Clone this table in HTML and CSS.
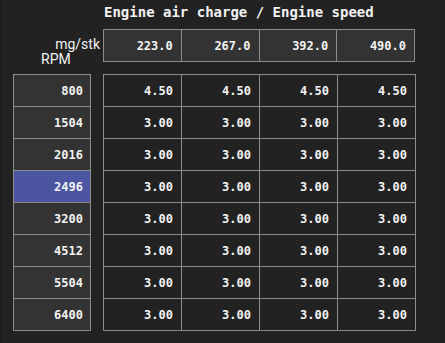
FILE: index.html
```html
<!DOCTYPE html>
<html lang="en">
<head>
    <meta charset="UTF-8">
    <meta name="viewport" content="width=device-width, initial-scale=1.0">
    <title>Engine air charge / Engine speed</title>
    <link rel="stylesheet" href="styles.css">
</head>
<body>
    <div class="map">
        <div class="spacer"></div>
        <div class="title">Engine air charge / Engine speed</div>

        <div class="axis-labels">
            <div class="unit">mg/stk</div>
            <div class="rpm">RPM</div>
        </div>
        <table class="grid head">
            <tr>
                <td>223.0</td>
                <td>267.0</td>
                <td>392.0</td>
                <td>490.0</td>
            </tr>
        </table>

        <table class="grid rows">
            <tr><td>800</td></tr>
            <tr><td>1504</td></tr>
            <tr><td>2016</td></tr>
            <tr><td class="active">2496</td></tr>
            <tr><td>3200</td></tr>
            <tr><td>4512</td></tr>
            <tr><td>5504</td></tr>
            <tr><td>6400</td></tr>
        </table>
        <table class="grid values">
            <tr><td>4.50</td><td>4.50</td><td>4.50</td><td>4.50</td></tr>
            <tr><td>3.00</td><td>3.00</td><td>3.00</td><td>3.00</td></tr>
            <tr><td>3.00</td><td>3.00</td><td>3.00</td><td>3.00</td></tr>
            <tr><td>3.00</td><td>3.00</td><td>3.00</td><td>3.00</td></tr>
            <tr><td>3.00</td><td>3.00</td><td>3.00</td><td>3.00</td></tr>
            <tr><td>3.00</td><td>3.00</td><td>3.00</td><td>3.00</td></tr>
            <tr><td>3.00</td><td>3.00</td><td>3.00</td><td>3.00</td></tr>
            <tr><td>3.00</td><td>3.00</td><td>3.00</td><td>3.00</td></tr>
        </table>
    </div>
</body>
</html>
```

FILE: styles.css
```css
body {
    margin: 0;
    min-height: 343px;
    background-color: #222222;
    border-left: 2px solid #1b1b1b;
    color: #f2f2f2;
    font-family: "DejaVu Sans Mono", "Liberation Mono", monospace;
}
.map {
    display: grid;
    grid-template-columns: 78px 313px;
    column-gap: 12px;
    align-items: start;
    padding: 0 0 0 11px;
}
.title {
    height: 29px;
    padding: 4px 0 0 1px;
    box-sizing: border-box;
    font-size: 14px;
    font-weight: bold;
    line-height: 17px;
    white-space: nowrap;
}
.axis-labels {
    height: 32px;
    margin-right: -9px;
    padding-top: 8px;
    box-sizing: border-box;
    font-family: Roboto, "Noto Sans", sans-serif;
    font-size: 14px;
    line-height: 15px;
}
.axis-labels .unit {
    text-align: right;
}
.axis-labels .rpm {
    text-align: left;
    padding-left: 28px;
}
.grid {
    border-collapse: collapse;
    font-size: 12px;
    font-weight: bold;
}
.grid td {
    height: 32px;
    padding: 0 8px 0 0;
    border: 1px solid #8c8c8c;
    text-align: right;
    box-sizing: border-box;
}
.head {
    width: 312px;
    table-layout: fixed;
}
.head td {
    background-color: #333333;
}
.rows {
    margin-top: 12px;
    width: 78px;
}
.rows td {
    background-color: #333333;
    padding-right: 7px;
}
.rows td.active {
    background-color: #4b55a0;
}
.values {
    margin-top: 12px;
    width: 313px;
    table-layout: fixed;
}
```
